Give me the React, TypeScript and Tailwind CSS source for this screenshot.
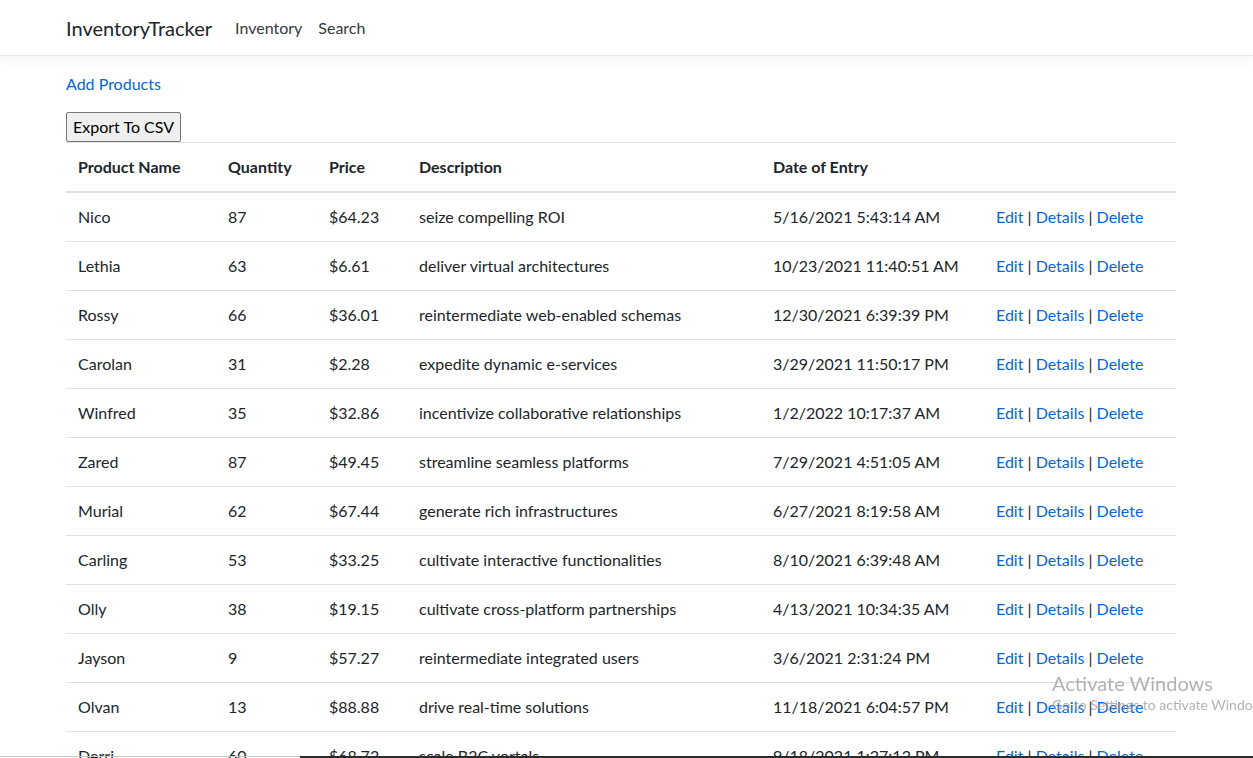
import React from "react";

type Product = {
  name: string;
  quantity: number;
  price: string;
  description: string;
  date: string;
};

const products: Product[] = [
  { name: "Nico", quantity: 87, price: "$64.23", description: "seize compelling ROI", date: "5/16/2021 5:43:14 AM" },
  { name: "Lethia", quantity: 63, price: "$6.61", description: "deliver virtual architectures", date: "10/23/2021 11:40:51 AM" },
  { name: "Rossy", quantity: 66, price: "$36.01", description: "reintermediate web-enabled schemas", date: "12/30/2021 6:39:39 PM" },
  { name: "Carolan", quantity: 31, price: "$2.28", description: "expedite dynamic e-services", date: "3/29/2021 11:50:17 PM" },
  { name: "Winfred", quantity: 35, price: "$32.86", description: "incentivize collaborative relationships", date: "1/2/2022 10:17:37 AM" },
  { name: "Zared", quantity: 87, price: "$49.45", description: "streamline seamless platforms", date: "7/29/2021 4:51:05 AM" },
  { name: "Murial", quantity: 62, price: "$67.44", description: "generate rich infrastructures", date: "6/27/2021 8:19:58 AM" },
  { name: "Carling", quantity: 53, price: "$33.25", description: "cultivate interactive functionalities", date: "8/10/2021 6:39:48 AM" },
  { name: "Olly", quantity: 38, price: "$19.15", description: "cultivate cross-platform partnerships", date: "4/13/2021 10:34:35 AM" },
  { name: "Jayson", quantity: 9, price: "$57.27", description: "reintermediate integrated users", date: "3/6/2021 2:31:24 PM" },
  { name: "Olvan", quantity: 13, price: "$88.88", description: "drive real-time solutions", date: "11/18/2021 6:04:57 PM" },
  { name: "Derri", quantity: 60, price: "$68.72", description: "scale B2C vortals", date: "9/18/2021 1:27:12 PM" },
];

const Navbar = () => {
  return (
    <nav className="h-[56px] border-b border-b-[#e5e5e5] bg-white shadow-[0_4px_12px_rgba(0,0,0,0.05)]">
      <div className="ml-[66px] flex h-full items-center">
        <a className="mr-[23px] text-[20px] text-[#212529]">InventoryTracker</a>
        <a className="mr-[16px] text-[16px] text-[#343a40]">Inventory</a>
        <a className="text-[16px] text-[#343a40]">Search</a>
      </div>
    </nav>
  );
};

const ProductRow = ({ product }: { product: Product }) => {
  return (
    <tr className="border-t border-t-[#dee2e6]">
      <td className="px-3 py-3">{product.name}</td>
      <td className="px-3 py-3">{product.quantity}</td>
      <td className="px-3 py-3">{product.price}</td>
      <td className="px-3 py-3">{product.description}</td>
      <td className="px-3 py-3">{product.date}</td>
      <td className="px-3 py-3">
        <a className="text-[#0366d6]">Edit</a> |{" "}
        <a className="text-[#0366d6]">Details</a> |{" "}
        <a className="text-[#0366d6]">Delete</a>
      </td>
    </tr>
  );
};

export default function App() {
  return (
    <div className="min-h-screen bg-white font-['Lato','Segoe_UI',sans-serif] text-[16px] leading-6 text-[#212529]">
      <Navbar />
      <main className="ml-[66px] w-[1110px] pt-[16px]">
        <a className="inline-block text-[#0366d6]">Add Products</a>
        <div className="mt-[16px]">
          <button className="rounded-[2px] border border-[#767676] bg-[#efefef] px-[6px] py-[2px] text-[16px] text-black">
            Export To CSV
          </button>
        </div>
        <table className="w-full table-fixed border-collapse text-left">
          <colgroup>
            <col className="w-[150px]" />
            <col className="w-[101px]" />
            <col className="w-[90px]" />
            <col className="w-[354px]" />
            <col className="w-[223px]" />
            <col className="w-[192px]" />
          </colgroup>
          <thead>
            <tr className="border-t border-b-2 border-t-[#dee2e6] border-b-[#dee2e6]">
              <th className="px-3 py-3 font-bold">Product Name</th>
              <th className="px-3 py-3 font-bold">Quantity</th>
              <th className="px-3 py-3 font-bold">Price</th>
              <th className="px-3 py-3 font-bold">Description</th>
              <th className="px-3 py-3 font-bold">Date of Entry</th>
              <th className="px-3 py-3"></th>
            </tr>
          </thead>
          <tbody>
            {products.map((p) => (
              <ProductRow key={p.name} product={p} />
            ))}
          </tbody>
        </table>
      </main>

      {/* windows watermark */}
      <div className="pointer-events-none fixed left-[1052px] top-[671px] whitespace-nowrap text-[#a0a0a0]/80">
        <div className="text-[20px] leading-6">Activate Windows</div>
        <div className="text-[14px] leading-5">Go to Settings to activate Windows.</div>
      </div>

      {/* scrollbar strip */}
      <div className="fixed bottom-0 left-0 flex h-[2px] w-full">
        <div className="w-[300px] border-t border-t-[#c8c8c8]"></div>
        <div className="flex-1 bg-[#2b2b2b]"></div>
      </div>
    </div>
  );
}
